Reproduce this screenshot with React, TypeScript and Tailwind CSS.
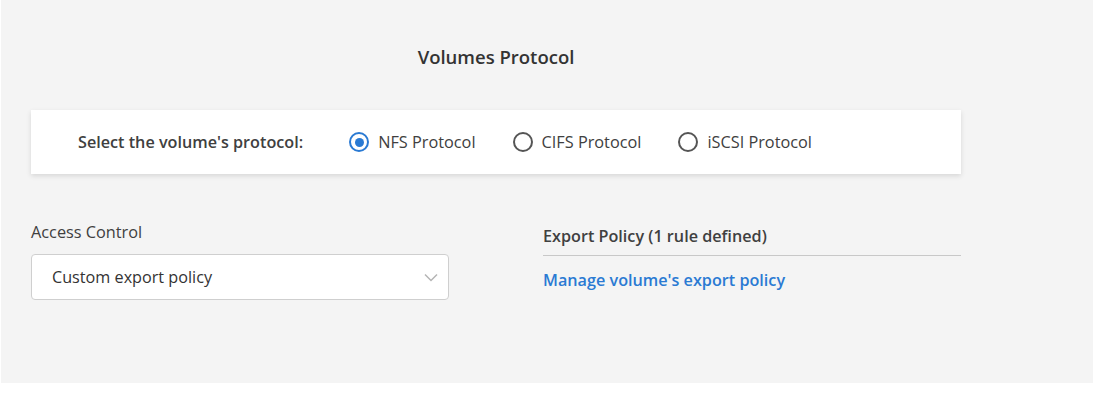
import { useState } from 'react';

const PROTOCOLS = ['NFS Protocol', 'CIFS Protocol', 'iSCSI Protocol'];

function Radio({ checked }: { checked: boolean }) {
  return (
    <span
      className={
        'flex h-[20px] w-[20px] items-center justify-center rounded-full border-2 ' +
        (checked ? 'border-[#2a7ad3]' : 'border-[#555]')
      }
    >
      {checked && <span className="h-[9px] w-[9px] rounded-full bg-[#2a7ad3]" />}
    </span>
  );
}

export default function App() {
  const [protocol, setProtocol] = useState('NFS Protocol');

  return (
    <div className="min-h-[407px] bg-white" style={{ fontFamily: '"Open Sans", "Liberation Sans", sans-serif' }}>
      <div className="ml-px h-[383px] w-[1092px] bg-[#f4f4f4] pl-[30px] pt-[45px] text-[#404040]">
        <div className="w-[930px]">
          <h1 className="text-center text-[18.5px] font-semibold leading-6 text-[#333]">Volumes Protocol</h1>

          <div className="mt-[41px] flex h-[64px] items-center bg-white pl-[47px] shadow-[0_2px_5px_rgba(0,0,0,0.12)]">
            <span className="text-[16.2px] font-semibold">Select the volume's protocol:</span>
            <div className="ml-[46px] flex items-center gap-[37px]">
              {PROTOCOLS.map((p) => (
                <label
                  key={p}
                  className="flex cursor-pointer items-center gap-[9px] text-[16.3px]"
                  onClick={() => setProtocol(p)}
                >
                  <Radio checked={protocol === p} />
                  {p}
                </label>
              ))}
            </div>
          </div>

          <div className="mt-[48px] grid grid-cols-2 gap-[94px]">
            <div>
              <div className="text-[16.3px] leading-5">Access Control</div>
              <div className="mt-[12px] flex h-[46px] items-center justify-between rounded-[4px] border border-[#cfcfcf] bg-white pl-[20px] pr-[10px]">
                <span className="text-[16.2px] text-[#333]">Custom export policy</span>
                <svg width="14" height="9" viewBox="0 0 14 9" fill="none">
                  <path d="M1 1.5l6 6 6-6" stroke="#b5b5b5" strokeWidth="1.5" />
                </svg>
              </div>
            </div>
            <div>
              <div className="mt-[4px] border-b border-[#c8c8c8] pb-[9px] text-[16.2px] font-semibold leading-5">
                Export Policy (1 rule defined)
              </div>
              <a className="mt-[12px] block text-[16.2px] font-semibold text-[#2a7ad3]" href="#">
                Manage volume's export policy
              </a>
            </div>
          </div>
        </div>
      </div>
    </div>
  );
}
